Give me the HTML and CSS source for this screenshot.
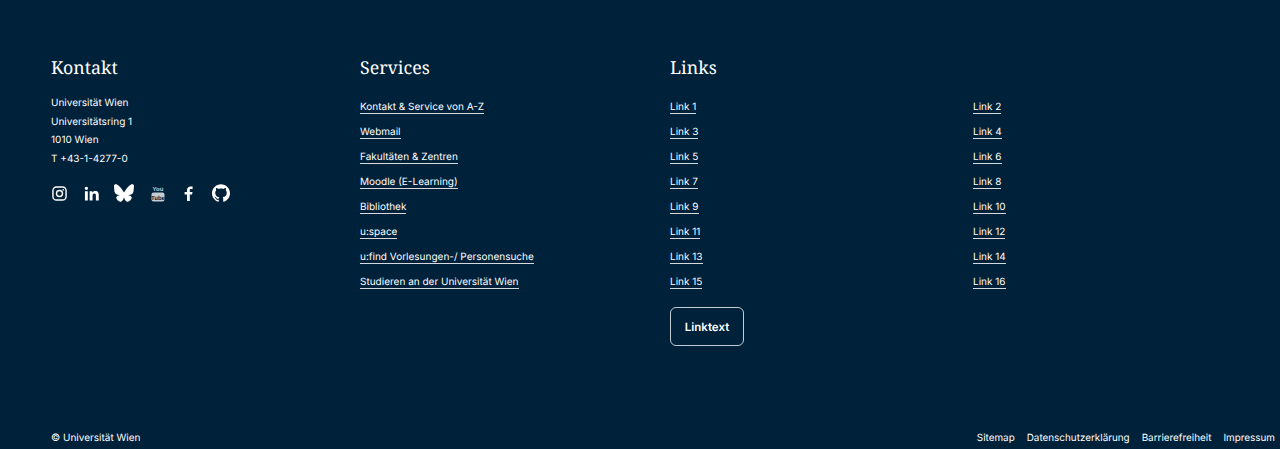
FILE: index.html
```html
<!DOCTYPE html>
<html lang="de">
<head>
<meta charset="utf-8">
<title>Universität Wien</title>
<link rel="stylesheet" href="styles.css">
</head>
<body>
<footer class="footer">
  <div class="columns">
    <section class="col">
      <h2 class="title">Kontakt</h2>
      <address class="address">
        <p>Universität Wien</p>
        <p>Universitätsring 1</p>
        <p>1010 Wien</p>
        <p>T +43-1-4277-0</p>
      </address>
      <div class="social">
        <a class="social-item" href="#" aria-label="Instagram"><svg width="15" height="15" viewBox="0 0 16 16" fill="none" stroke="#fff"><rect x="1" y="1" width="14" height="14" rx="3.800" stroke-width="1.500"/><circle cx="8" cy="8" r="3.200" stroke-width="1.500"/><circle cx="12" cy="4" r=".9" fill="#fff" stroke="none"/></svg></a>
        <a class="social-item" href="#" aria-label="LinkedIn"><svg width="15" height="15" viewBox="0 0 24 24" fill="#fff"><path d="M1.500 8.200h4.600V23H1.500zM3.800 1a2.700 2.700 0 1 1 0 5.400 2.700 2.700 0 0 1 0-5.400zM9 8.200h4.400v2c.7-1.300 2.300-2.400 4.600-2.400 4.700 0 5.600 3.100 5.600 7.100V23H19v-7.200c0-1.700 0-3.900-2.400-3.900s-2.900 1.900-2.900 3.800V23H9z"/></svg></a>
        <a class="social-item" href="#" aria-label="Bluesky"><svg width="20" height="20" viewBox="0 0 512 512" fill="#fff"><path d="M111.800 62.200C170.200 105.900 233 194.700 256 242.400c23-47.600 85.800-136.400 144.200-180.200c42.100-31.600 110.300-56 110.300 21.800c0 15.500-8.900 130.500-14.100 149.200C478.200 298 412 314.600 353.100 304.500c102.900 17.500 129.100 75.500 72.500 133.500c-107.400 110.200-154.300-27.600-166.300-62.900c-1.700-4.900-2.600-7.800-3.300-7.800s-1.600 3-3.300 7.800c-12 35.300-59 173.100-166.300 62.900c-56.500-58-30.400-116 72.500-133.500C100 314.600 33.800 298 15.700 233.100C10.400 214.400 1.500 99.400 1.500 83.900c0-77.800 68.200-53.400 110.300-21.800z"/></svg></a>
        <a class="social-item social-yt" href="#" aria-label="YouTube"><svg width="14" height="17" viewBox="0 0 14 17"><text class="yt-you" x="7" y="6" text-anchor="middle">You</text><rect x=".5" y="7.500" width="13" height="9" rx="2" fill="#c3ccd3"/><text class="yt-tube" x="7" y="14.500" text-anchor="middle">Tube</text></svg></a>
        <a class="social-item" href="#" aria-label="Facebook"><svg width="9" height="15" viewBox="0 0 9 15" fill="#fff"><path d="M5.800 15V8.500h2.300l.4-2.600H5.800V4.300c0-.8.300-1.300 1.400-1.300h1.400V.6C8.300.5 7.500.4 6.600.4 4.500.4 3 1.700 3 4v1.900H.6v2.600H3V15z"/></svg></a>
        <a class="social-item" href="#" aria-label="GitHub"><svg width="18" height="18" viewBox="0 0 24 24" fill="#fff"><path d="M12 .297c-6.630 0-12 5.373-12 12 0 5.303 3.438 9.800 8.205 11.385.6.113.82-.258.82-.577 0-.285-.01-1.040-.015-2.040-3.338.724-4.042-1.610-4.042-1.610C4.422 18.070 3.633 17.700 3.633 17.700c-1.087-.744.084-.729.084-.729 1.205.084 1.838 1.236 1.838 1.236 1.070 1.835 2.809 1.305 3.495.998.108-.776.417-1.305.76-1.605-2.665-.3-5.466-1.332-5.466-5.930 0-1.310.465-2.380 1.235-3.220-.135-.303-.54-1.523.105-3.176 0 0 1.005-.322 3.300 1.230.96-.267 1.980-.399 3-.405 1.020.006 2.040.138 3 .405 2.280-1.552 3.285-1.230 3.285-1.230.645 1.653.24 2.873.12 3.176.765.84 1.230 1.910 1.230 3.220 0 4.610-2.805 5.625-5.475 5.920.42.36.81 1.096.81 2.220 0 1.606-.015 2.896-.015 3.286 0 .315.21.69.825.57C20.565 22.092 24 17.592 24 12.297c0-6.627-5.373-12-12-12"/></svg></a>
      </div>
    </section>
    <section class="col">
      <h2 class="title">Services</h2>
      <ul class="links">
        <li><a href="#">Kontakt &amp; Service von A-Z</a></li>
        <li><a href="#">Webmail</a></li>
        <li><a href="#">Fakultäten &amp; Zentren</a></li>
        <li><a href="#">Moodle (E-Learning)</a></li>
        <li><a href="#">Bibliothek</a></li>
        <li><a href="#">u:space</a></li>
        <li><a href="#">u:find Vorlesungen-/ Personensuche</a></li>
        <li><a href="#">Studieren an der Universität Wien</a></li>
      </ul>
    </section>
    <section class="col col-wide">
      <h2 class="title">Links</h2>
      <ul class="links links-two">
        <li><a href="#">Link 1</a></li>
        <li><a href="#">Link 2</a></li>
        <li><a href="#">Link 3</a></li>
        <li><a href="#">Link 4</a></li>
        <li><a href="#">Link 5</a></li>
        <li><a href="#">Link 6</a></li>
        <li><a href="#">Link 7</a></li>
        <li><a href="#">Link 8</a></li>
        <li><a href="#">Link 9</a></li>
        <li><a href="#">Link 10</a></li>
        <li><a href="#">Link 11</a></li>
        <li><a href="#">Link 12</a></li>
        <li><a href="#">Link 13</a></li>
        <li><a href="#">Link 14</a></li>
        <li><a href="#">Link 15</a></li>
        <li><a href="#">Link 16</a></li>
      </ul>
      <a class="button" href="#">Linktext</a>
    </section>
  </div>
  <div class="bottom">
    <span class="copyright">© Universität Wien</span>
    <nav class="legal">
      <a href="#">Sitemap</a>
      <a href="#">Datenschutzerklärung</a>
      <a href="#">Barrierefreiheit</a>
      <a href="#">Impressum</a>
    </nav>
  </div>
</footer>
</body>
</html>
```
FILE: styles.css
```css
* { box-sizing: border-box; }
html, body { margin: 0; height: 100%; }
body {
  background: #00213a;
  color: #fff;
  font-family: Inter, "Liberation Sans", sans-serif;
  font-size: 10px;
  text-rendering: geometricPrecision;
  overflow: hidden;
}
a { color: inherit; text-decoration: none; }
.footer { height: 449px; display: flex; flex-direction: column; padding: 57px 5px 0 51px; }
.columns { display: grid; grid-template-columns: 309px 310px 1fr; height: 372px; }
.title {
  margin: 0;
  font-family: "Noto Serif", "DejaVu Serif", "Liberation Serif", serif;
  font-size: 17.800px;
  font-weight: 400;
  line-height: 22px;
}
.address { font-style: normal; margin-top: 15px; line-height: 18.500px; }
.address p { margin: 0; }
.social { display: flex; align-items: center; margin: 15px 0 0 -8px; height: 20px; }
.social-item { width: 32.400px; display: flex; justify-content: center; }
.social-yt { padding-left: 3px; }
.yt-you { font: 700 6px "Liberation Sans", sans-serif; fill: #c3ccd3; }
.yt-tube { font: 700 6px "Liberation Sans", sans-serif; fill: #00213a; }
.links { list-style: none; margin: 21px 0 0; padding: 0; }
.links li { height: 25px; line-height: 14px; }
.links a { display: inline-block; border-bottom: 1px solid #d5dade; line-height: 14px; height: 14px; }
.links-two { display: grid; grid-template-columns: 303px 1fr; }
.button {
  display: inline-flex;
  align-items: center;
  justify-content: center;
  width: 74px;
  height: 39px;
  margin-top: 7px;
  padding-top: 1px;
  border: 1px solid #c4ccd3;
  border-radius: 6px;
  font-size: 11.500px;
  font-weight: 600;
}
.bottom { display: flex; justify-content: space-between; align-items: center; height: 18px; }
.legal { display: flex; gap: 12px; font-size: 9.900px; }
```
